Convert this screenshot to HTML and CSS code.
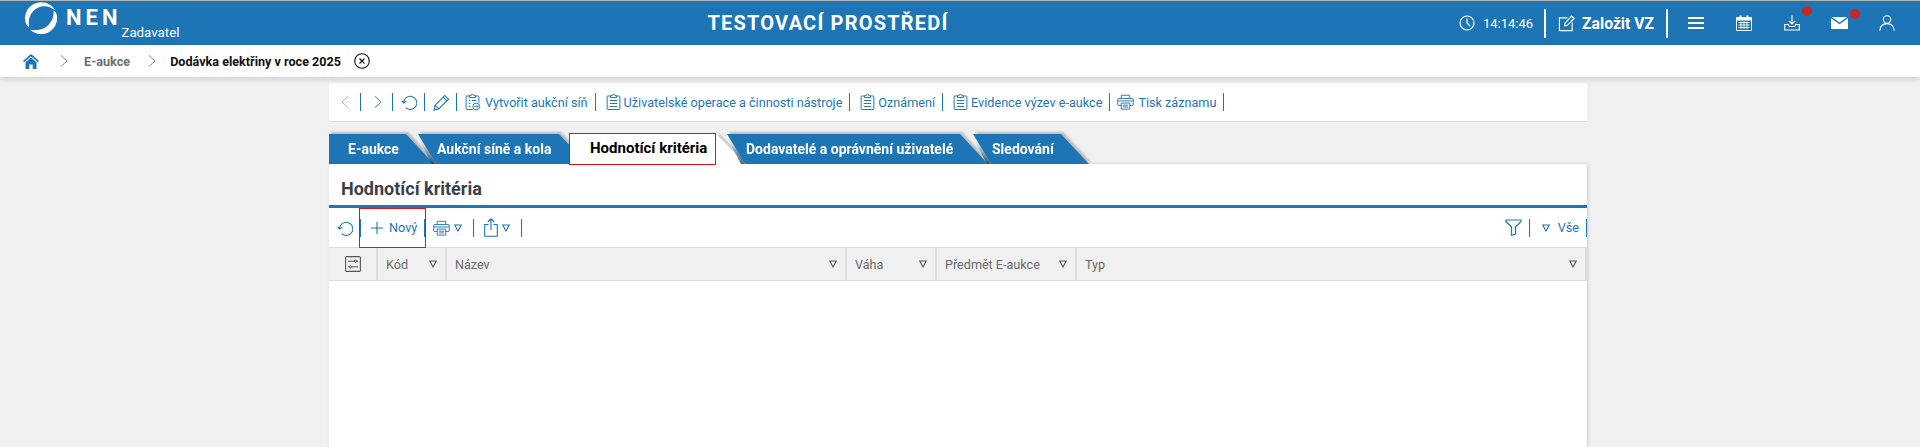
FILE: index.html
```html
<!DOCTYPE html>
<html lang="cs">
<head>
    <meta charset="UTF-8">
    <meta name="viewport" content="width=device-width, initial-scale=1.0">
    <title>NEN Zadavatel</title>
    <link rel="stylesheet" href="styles.css">
</head>
<body>

    <svg class="icon-defs" width="0" height="0">
        <symbol id="i-clip" viewBox="0 0 20 24">
            <path d="M6 4H2.500a1 1 0 0 0-1 1v16a1 1 0 0 0 1 1h15a1 1 0 0 0 1-1V5a1 1 0 0 0-1-1H14M6 6V3.500h2.200a1.800 1.800 0 0 1 3.600 0H14V6ZM5 10h10M5 14h10M5 18h10" fill="none" stroke="currentColor" stroke-width="1.300"/>
        </symbol>
        <symbol id="i-print" viewBox="0 0 24 22">
            <path d="M6 6V1.500h12V6M6 16H3a2 2 0 0 1-2-2V8a2 2 0 0 1 2-2h18a2 2 0 0 1 2 2v6a2 2 0 0 1-2 2h-3M6 12.500h12v8.500H6ZM1.500 9.500h21M8.500 15.500h7M8.500 18h7" fill="none" stroke="currentColor" stroke-width="1.300"/>
        </symbol>
        <symbol id="i-refresh" viewBox="0 0 17 16">
            <path d="M2.800 9A7 7 0 1 1 5 14M.6 6.500 2.800 9.200l3-2.200" fill="none" stroke="currentColor" stroke-width="1.100"/>
        </symbol>
        <symbol id="i-down" viewBox="0 0 8 8">
            <path d="M.8 1h6.400L4 7Z" fill="none" stroke="currentColor" stroke-width="1.100"/>
        </symbol>
    </svg>

    <header class="topbar">
        <div class="brand">
            <svg class="logo" viewBox="0 0 32 32">
                <path d="M1.600 23A16 16 0 0 1 30 8.300C26 5 22 3.800 18 4.200 10 5 4 12 3.800 20c-.1 2 0 4 .5 5.500Z" fill="#fff"/>
                <path d="M31 10.500A16 16 0 0 1 5 27.800c8 1.200 16-.8 20-6.800 3-4 4-8 3.500-12.500Z" fill="#fff"/>
            </svg>
            <span class="brand-name">NEN</span>
            <span class="brand-role">Zadavatel</span>
        </div>
        <div class="env-title">TESTOVACÍ PROSTŘEDÍ</div>
        <div class="top-actions">
            <svg class="top-clock" viewBox="0 0 16 16"><circle cx="8" cy="8" r="7" fill="none" stroke="currentColor" stroke-width="1.200"/><path d="M8 3.500V8l3 3" fill="none" stroke="currentColor" stroke-width="1.200"/></svg>
            <span class="clock-time">14:14:46</span>
            <span class="top-sep sep-clock"></span>
            <svg class="top-edit" viewBox="0 0 18 18"><path d="M10 3H1.500v13.500H15V8" fill="none" stroke="currentColor" stroke-width="1.200"/><path d="M7 11.500l.5-3L14.500 1.200l2.500 2.500-7 7.200Z" fill="none" stroke="currentColor" stroke-width="1.200"/></svg>
            <span class="new-order">Založit VZ</span>
            <span class="top-sep"></span>
            <span class="top-burger"><i></i><i></i><i></i></span>
            <svg class="top-icon cal" viewBox="0 0 16 16"><path d="M.5 2.500h15V15.500H.5Z" fill="none" stroke="#fff"/><path d="M.5 2.500h15v3H.5ZM3.500 .5h2v3h-2ZM10.500 .5h2v3h-2Z" fill="#fff"/><path d="M2.500 7.500h11M2.500 10h11M2.500 12.500h11M5 6.500v7.500M8 6.500v7.500M11 6.500v7.500" stroke="#fff" stroke-width=".9"/></svg>
            <span class="top-badged dl">
                <svg class="top-icon" viewBox="0 0 16 16"><path d="M8 .5v8M5 6l3 3 3-3" fill="none" stroke="#fff" stroke-width="1.100"/><path d="M.7 9.500h3.500l1 2h5.600l1-2h3.500v5.500H.7Z" fill="none" stroke="#fff" stroke-width="1.100"/></svg>
                <span class="dot"></span>
            </span>
            <span class="top-badged mail">
                <svg class="top-icon mail-ico" viewBox="0 0 17 12"><path d="M0 1.200l8.500 6 8.500-6V12H0Z" fill="#fff"/><path d="M.8 0h15.400L8.500 5.400Z" fill="#fff"/></svg>
                <span class="dot"></span>
            </span>
            <svg class="top-icon user" viewBox="0 0 16 16"><circle cx="8" cy="4.500" r="3.700" fill="none" stroke="#fff" stroke-width="1.100"/><path d="M.8 15.800c0-4.500 3-7.200 7.200-7.200s7.200 2.700 7.200 7.200" fill="none" stroke="#fff" stroke-width="1.100"/></svg>
        </div>
    </header>

    <nav class="crumbs">
        <svg class="crumb-home" viewBox="0 0 16 15"><path d="M8 0 0 7l1 1.200L8 2.200l7 6L16 7Z" fill="#1d75b5"/><path d="M8 3.500 2.500 8.200V15h3.800v-4.500h3.400V15h3.800V8.200Z" fill="#1d75b5"/></svg>
        <svg class="crumb-arrow" viewBox="0 0 8 12"><path d="M1 .5 7 6l-6 5.500" fill="none" stroke="currentColor"/></svg>
        <span class="crumb-link">E-aukce</span>
        <svg class="crumb-arrow" viewBox="0 0 8 12"><path d="M1 .5 7 6l-6 5.500" fill="none" stroke="currentColor"/></svg>
        <span class="crumb-current">Dodávka elektřiny v roce 2025</span>
        <svg class="crumb-close" viewBox="0 0 16 16"><circle cx="8" cy="8" r="7.300" fill="none" stroke="#111" stroke-width="1.100"/><path d="M5.500 5.500l5 5M10.500 5.500l-5 5" stroke="#111" stroke-width="1.100"/></svg>
    </nav>

    <main class="content">
        <div class="toolbar">
            <svg class="tb-chev tb-back" viewBox="0 0 9 14"><path d="M8 .5 1 7l7 6.500" fill="none" stroke="currentColor"/></svg>
            <span class="sep"></span>
            <svg class="tb-chev tb-next" viewBox="0 0 9 14"><path d="M1 .5 8 7l-7 6.500" fill="none" stroke="currentColor"/></svg>
            <span class="sep"></span>
            <svg class="ico-18"><use href="#i-refresh"/></svg>
            <span class="sep"></span>
            <svg class="ico-pencil" viewBox="0 0 18 18"><path d="M1 17l1.200-5L12.500 1.500l4 4L6 15.800ZM2.200 12l3.800 3.800M10.700 3.300l4 4" fill="none" stroke="currentColor" stroke-width="1.100"/></svg>
            <span class="sep"></span>
            <span class="tb-item tb-first">
                <svg class="ico-clip" viewBox="0 0 20 24"><path d="M6 4H2.500a1 1 0 0 0-1 1v16a1 1 0 0 0 1 1h8M14 4h3.500a1 1 0 0 1 1 1v8M6 6V3.500h2.200a1.800 1.800 0 0 1 3.600 0H14V6ZM5 10h2M9 10h6M5 14h2M5 18h2" fill="none" stroke="currentColor" stroke-width="1.300"/><circle cx="15" cy="18" r="4.500" fill="none" stroke="currentColor" stroke-width="1.300"/><path d="M12.500 18h5M15.500 16l2 2-2 2" fill="none" stroke="currentColor"/></svg>
                Vytvořit aukční síň
            </span>
            <span class="sep"></span>
            <span class="tb-item"><svg class="ico-clip"><use href="#i-clip"/></svg>Uživatelské operace a činnosti nástroje</span>
            <span class="sep"></span>
            <span class="tb-item"><svg class="ico-clip"><use href="#i-clip"/></svg>Oznámení</span>
            <span class="sep"></span>
            <span class="tb-item"><svg class="ico-clip"><use href="#i-clip"/></svg>Evidence výzev e-aukce</span>
            <span class="sep"></span>
            <span class="tb-item tb-print"><svg class="ico-print"><use href="#i-print"/></svg>Tisk záznamu</span>
            <span class="sep"></span>
        </div>

        <div class="tabs">
            <div class="tab tab-1"><span>E-aukce</span></div>
            <div class="tab tab-2"><span>Aukční síně a kola</span></div>
            <div class="tab tab-3 active"><span>Hodnotící kritéria</span></div>
            <div class="tab tab-4"><span>Dodavatelé a oprávnění uživatelé</span></div>
            <div class="tab tab-5"><span>Sledování</span></div>
        </div>

        <section class="panel">
            <h2 class="panel-title">Hodnotící kritéria</h2>
            <div class="grid-tools">
                <svg class="ico-18 gt-refresh"><use href="#i-refresh"/></svg>
                <span class="sep"></span>
                <span class="gt-new">
                    <svg class="ico-plus" viewBox="0 0 12 12"><path d="M6 0v12M0 6h12" stroke="currentColor" stroke-width="1.100"/></svg>
                    Nový
                </span>
                <span class="sep"></span>
                <svg class="ico-print gt-print"><use href="#i-print"/></svg>
                <svg class="ico-down"><use href="#i-down"/></svg>
                <span class="sep gt-sep"></span>
                <svg class="ico-share" viewBox="0 0 14 19"><path d="M4.500 6.500H.7v11.800h12.600V6.500H9.500M7 12V1M3.800 4 7 .8 10.200 4" fill="none" stroke="currentColor" stroke-width="1.100"/></svg>
                <svg class="ico-down"><use href="#i-down"/></svg>
                <span class="sep gt-sep"></span>
                <span class="gt-spacer"></span>
                <svg class="ico-funnel" viewBox="0 0 17 17"><path d="M1 1h15v1.500L10.500 8v7l-4 1.200V8L1 2.500Z" fill="none" stroke="currentColor" stroke-width="1.200"/></svg>
                <span class="sep gt-sep2"></span>
                <svg class="ico-down gt-all-arrow"><use href="#i-down"/></svg>
                <span class="gt-all">Vše</span>
                <span class="sep gt-last"></span>
            </div>

            <div class="grid-head">
                <div class="col col-set">
                    <svg class="ico-settings" viewBox="0 0 16 16"><rect x=".6" y=".6" width="14.800" height="14.800" rx="1" fill="none" stroke="#555" stroke-width="1.100"/><path d="M3 5.200h6.500M11.500 5.200H13M3 10.800h1.500M6.500 10.800H13" stroke="#555"/><circle cx="10.500" cy="5.200" r="1.100" fill="none" stroke="#555" stroke-width=".9"/><circle cx="5.500" cy="10.800" r="1.100" fill="none" stroke="#555" stroke-width=".9"/></svg>
                </div>
                <div class="col col-code"><span>Kód</span><svg class="ico-down"><use href="#i-down"/></svg></div>
                <div class="col col-name"><span>Název</span><svg class="ico-down"><use href="#i-down"/></svg></div>
                <div class="col col-weight"><span>Váha</span><svg class="ico-down"><use href="#i-down"/></svg></div>
                <div class="col col-subject"><span>Předmět E-aukce</span><svg class="ico-down"><use href="#i-down"/></svg></div>
                <div class="col col-type"><span>Typ</span><svg class="ico-down"><use href="#i-down"/></svg></div>
            </div>
        </section>
    </main>

</body>
</html>
```

FILE: styles.css
```css
* {
    box-sizing: border-box;
}

html, body {
    height: 100%;
}

body {
    font-family: Roboto, sans-serif;
    margin: 0;
    padding: 0;
    background: #f0f0f0;
    color: #333;
    overflow: hidden;
}

svg {
    display: block;
    flex: none;
}

.icon-defs {
    position: absolute;
}

/* Top bar */
.topbar {
    display: flex;
    align-items: center;
    height: 45px;
    border-top: 1px solid #b5b5b5;
    padding-left: 25px;
    background: #1d75b5;
    color: #fff;
}

.brand {
    display: flex;
    width: 568px;
    flex: none;
}

.logo {
    width: 32px;
    height: 32px;
}

.brand-name {
    margin-left: 9px;
    font-size: 22px;
    font-weight: 700;
    letter-spacing: 4px;
    line-height: 32px;
}

.brand-role {
    margin: 20px 0 0 0;
    font-size: 13.300px;
    line-height: 22px;
}

.env-title {
    width: 470px;
    flex: none;
    font-size: 20px;
    font-weight: 700;
    letter-spacing: 1.200px;
    text-align: center;
}

.top-actions {
    display: flex;
    align-items: center;
    margin-left: auto;
    padding-right: 25px;
}

.top-clock {
    width: 16px;
    height: 16px;
}

.clock-time {
    margin-left: 8px;
    font-size: 13px;
}

.top-sep {
    width: 2px;
    height: 29px;
    margin: 0 12px;
    background: #fff;
}

.sep-clock {
    margin-left: 11px;
}

.top-edit {
    width: 17px;
    height: 17px;
}

.new-order {
    margin-left: 7px;
    font-size: 15.700px;
    font-weight: 700;
}

.top-burger {
    display: flex;
    flex-direction: column;
    gap: 3px;
    width: 16px;
    margin: 0 32px 0 8px;
}

.top-burger i {
    display: block;
    height: 2px;
    background: #fff;
}

.top-icon {
    width: 16px;
    height: 16px;
}

.cal {
    margin-right: 32px;
}

.top-badged {
    position: relative;
    display: block;
}

.dl,
.mail {
    margin-right: 31px;
}

.mail-ico {
    width: 17px;
    height: 12px;
}

.dot {
    position: absolute;
    top: -9px;
    right: -12px;
    width: 10px;
    height: 10px;
    border-radius: 50%;
    background: #c62828;
}

.mail .dot {
    top: -8px;
}

/* Breadcrumb */
.crumbs {
    position: relative;
    display: flex;
    align-items: center;
    height: 32px;
    padding-left: 23px;
    background: #fff;
    box-shadow: 0 2px 6px rgba(0, 0, 0, 0.15);
}

.crumb-home {
    width: 16px;
    height: 15px;
}

.crumb-arrow {
    width: 8px;
    height: 12px;
    margin: 0 16px 0 21px;
    color: #888;
}

.crumb-link {
    font-size: 12.700px;
    font-weight: 700;
    color: #6f6f6f;
}

.crumb-link + .crumb-arrow {
    margin: 0 14px 0 18px;
}

.crumb-current {
    font-size: 12.600px;
    font-weight: 700;
    color: #111;
}

.crumb-close {
    width: 16px;
    height: 16px;
    margin-left: 13px;
}

/* Content column */
.content {
    width: 1258px;
    margin: 6px 0 0 329px;
}

.toolbar {
    display: flex;
    align-items: center;
    height: 39px;
    padding-left: 12px;
    background: #fff;
    border-bottom: 1px solid #ddd;
    color: #1d75b5;
    font-size: 12.650px;
}

.sep {
    width: 1px;
    height: 18px;
    flex: none;
    background: #1d75b5;
}

.tb-chev {
    width: 8px;
    height: 14px;
}

.tb-back {
    margin-right: 11px;
    color: #a9a9a9;
}

.tb-next {
    margin: 0 10px 0 13px;
}

.ico-18 {
    width: 16px;
    height: 16px;
    margin: 0 7px 0 8px;
}

.ico-pencil {
    width: 17px;
    height: 17px;
    margin: 0 6px 0 8px;
}

.tb-item {
    display: flex;
    align-items: center;
    gap: 3px;
    padding: 0 7px 0 10px;
    white-space: nowrap;
}

.tb-first {
    gap: 5px;
    padding-left: 8px;
}

.tb-print {
    gap: 4px;
    padding-left: 7px;
}

.ico-clip {
    width: 15px;
    height: 18px;
}

.ico-print {
    width: 17px;
    height: 16px;
}

/* Tabs */
.tabs {
    display: flex;
    height: 30px;
    margin-top: 12px;
}

.tab {
    position: relative;
    height: 30px;
    filter: drop-shadow(2px -2px 1px rgba(0, 0, 0, 0.22));
}

.tab span {
    display: block;
    height: 30px;
    padding-left: 19px;
    background: #1d75b5;
    color: #fff;
    font-size: 14px;
    font-weight: 700;
    line-height: 31px;
    white-space: nowrap;
    clip-path: polygon(0 0, calc(100% - 28px) 0, 100% 100%, 18px 100%);
}

.tab-2::before,
.tab-4::before,
.tab-5::before {
    content: "";
    position: absolute;
    top: 0;
    left: -3px;
    width: 24px;
    height: 30px;
    background: linear-gradient(to bottom, transparent 25%, rgba(10, 50, 80, 0.75));
    clip-path: polygon(3px 0, 21px 100%, 17px 100%, 1px 0);
}

.tab-1 {
    width: 105px;
}

.tab-1 span {
    clip-path: polygon(0 0, calc(100% - 28px) 0, 100% 100%, 0 100%);
}

.tab-2 {
    width: 169px;
    margin-left: -16px;
}

.tab-3 {
    width: 147px;
    margin-left: -18px;
    filter: none;
}

.tab-3 span {
    height: 32px;
    margin-top: -1px;
    padding-left: 20px;
    background: #fff;
    color: #000;
    font-size: 15px;
    border: 1px solid #e1121f;
    line-height: 29px;
    clip-path: none;
}

.tab-3::before,
.tab-3::after {
    content: "";
    position: absolute;
    top: 0;
    left: 100%;
    width: 30px;
    height: 30px;
    clip-path: polygon(0 0, 100% 100%, 0 100%);
}

.tab-3::before {
    top: -1px;
    left: calc(100% + 3px);
    background: #cfcfcf;
}

.tab-3::after {
    background: #fff;
}

.tab-4 {
    width: 261px;
    margin-left: 11px;
}

.tab-5 {
    width: 116px;
    margin-left: -15px;
}

/* Panel */
.panel {
    height: 283px;
    background: #fff;
    box-shadow: 1px 0 3px rgba(0, 0, 0, 0.15);
}

.panel-title {
    margin: 0;
    height: 44px;
    padding: 14px 0 0 12px;
    border-bottom: 3px solid #1d75b5;
    color: #3a3f4a;
    font-size: 18px;
    font-weight: 700;
    line-height: 22px;
}

.grid-tools {
    display: flex;
    align-items: center;
    height: 39px;
    color: #1d75b5;
    font-size: 12.700px;
}

.gt-refresh {
    margin: 0 7px 0 8px;
}

.gt-new {
    position: relative;
    display: flex;
    align-items: center;
    align-self: stretch;
    gap: 6px;
    padding: 0 7px 0 10px;
}

.gt-new::before {
    content: "";
    position: absolute;
    top: 0;
    bottom: -1px;
    left: -2px;
    right: -2px;
    border: 1px solid #e1121f;
}

.ico-plus {
    width: 12px;
    height: 12px;
}

.gt-print {
    margin-left: 8px;
}

.ico-down {
    width: 8px;
    height: 8px;
    margin-left: 4px;
}

.gt-sep {
    margin: 0 10px 0 11px;
}

.ico-share {
    width: 14px;
    height: 19px;
}

.gt-spacer {
    flex: 1;
}

.ico-funnel {
    width: 17px;
    height: 17px;
}

.gt-sep2 {
    margin: 0 12px 0 7px;
}

.gt-all-arrow {
    margin: 0 8px 0 0;
}

.gt-last {
    margin: 0 0 0 7px;
}

.grid-head {
    display: flex;
    height: 34px;
    background: #f0f0f0;
    border-top: 1px solid #ddd;
    border-bottom: 1px solid #ddd;
    color: #6a6a6a;
    font-size: 12.600px;
}

.col {
    display: flex;
    align-items: center;
    justify-content: space-between;
    padding: 0 8px;
    border-right: 2px solid #ddd;
    flex: none;
}

.col .ico-down {
    color: #555;
}

.col-set {
    width: 49px;
    justify-content: center;
}

.col-code { width: 69px; }
.col-name { width: 400px; }
.col-weight { width: 90px; }
.col-subject { width: 140px; }

.col-type {
    flex: 1;
}

.ico-settings {
    width: 16px;
    height: 16px;
}
```
